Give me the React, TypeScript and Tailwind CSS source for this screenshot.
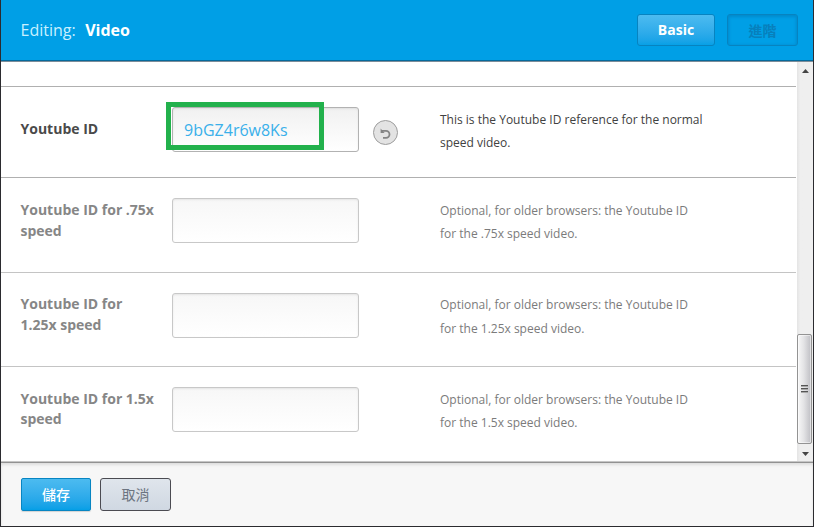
import React from "react";

type Setting = {
  label: string[];
  help: string[];
  value?: string;
  height: string;
  labelPad: string;
  helpPad: string;
  gap: string;
};

const settings: Setting[] = [
  {
    label: ["Youtube ID"],
    help: ["This is the Youtube ID reference for the normal", "speed video."],
    value: "9bGZ4r6w8Ks",
    height: "h-[91px]",
    labelPad: "pt-[31px] leading-[21px]",
    helpPad: "pt-[21px]",
    gap: "leading-[23px]",
  },
  {
    label: ["Youtube ID for .75x", "speed"],
    help: ["Optional, for older browsers: the Youtube ID", "for the .75x speed video."],
    height: "h-[95px]",
    labelPad: "pt-[21px] leading-[21px]",
    helpPad: "pt-[21px]",
    gap: "leading-[23px]",
  },
  {
    label: ["Youtube ID for", "1.25x speed"],
    help: ["Optional, for older browsers: the Youtube ID", "for the 1.25x speed video."],
    height: "h-[94px]",
    labelPad: "pt-[20px] leading-[21px]",
    helpPad: "pt-[20px]",
    gap: "leading-[24px]",
  },
  {
    label: ["Youtube ID for 1.5x", "speed"],
    help: ["Optional, for older browsers: the Youtube ID", "for the 1.5x speed video."],
    height: "h-[95px]",
    labelPad: "pt-[22px] leading-[20px]",
    helpPad: "pt-[21px]",
    gap: "leading-[23px]",
  },
];

function SettingRow({ item }: { item: Setting }) {
  const active = item.value !== undefined;
  return (
    <li
      className={`flex shrink-0 border-t pl-[19.5px] ${item.height} ${active ? "border-[#b0b0b0]" : "border-[#c4c4c4] nth-2:border-[#b0b0b0]"}`}
    >
      <div
        className={`w-[151.5px] shrink-0 whitespace-nowrap text-[14px] font-bold ${item.labelPad} ${active ? "text-[#4a4a4a]" : "text-[#868686]"}`}
      >
        {item.label.map((line) => (
          <div key={line}>{line}</div>
        ))}
      </div>
      <div className="relative w-[187px] shrink-0 pt-5">
        <input
          readOnly
          value={item.value ?? ""}
          className={`block h-[45px] w-[187px] rounded-[3px] border bg-linear-to-b to-white px-[11px] text-[16px] text-[#3ab0ea] shadow-[inset_0_1px_2px_rgba(0,0,0,0.08)] outline-none ${active ? "border-[#b2b2b2] from-[#f1f1f1]" : "border-[#c8c8c8] from-[#f7f7f7]"}`}
        />
        {active && (
          <div className="absolute top-[15px] left-[-6px] h-[48px] w-[158px] border-5 border-[#22b14c]" />
        )}
      </div>
      <div className="w-[81px] shrink-0 pt-[33px] pl-[14px]">
        {active && (
          <button className="flex size-[25px] items-center justify-center rounded-full border border-[#9d9d9d] bg-[#e3e3e3] pt-[2px]">
            <svg width="13" height="13" viewBox="0 0 13 13" fill="none" stroke="#848484" strokeWidth="1.8">
              <path d="M2.8 3.8H7A3.5 3.5 0 0 1 7 10.8H4" />
              <path d="M1.6 1.6V6.1H5.6Z" fill="#848484" stroke="none" />
            </svg>
          </button>
        )}
      </div>
      <div
        className={`whitespace-nowrap text-[12px] ${item.helpPad} ${item.gap} ${active ? "text-[#414141]" : "text-[#7b7b7b]"}`}
      >
        {item.help.map((line) => (
          <div key={line}>{line}</div>
        ))}
      </div>
    </li>
  );
}

function Scrollbar() {
  return (
    <div className="flex w-[16px] shrink-0 flex-col items-start bg-linear-to-r from-[#e4e4e4] via-[#efefef] via-20% to-[#efefef]">
      <svg width="16" height="17" viewBox="0 0 16 17">
        <path d="M8.5 7L12 11H5Z" fill="#444" />
      </svg>
      <div className="mt-[255px] flex h-[110px] w-[15px] flex-col items-center justify-center gap-px rounded-[2px] border border-[#939393] bg-linear-to-r from-[#f7f7f7] via-[#e3e3e5] via-45% to-[#bfbfc4] shadow-[inset_0_0_0_1px_rgba(255,255,255,0.5)]">
        <i className="h-[2px] w-[7px] border-b border-[#a8a8a8] bg-[#555]" />
        <i className="h-[2px] w-[7px] border-b border-[#a8a8a8] bg-[#555]" />
        <i className="h-[2px] w-[7px] border-b border-[#a8a8a8] bg-[#555]" />
      </div>
      <svg width="16" height="17" viewBox="0 0 16 17">
        <path d="M8.5 12L5 8H12Z" fill="#444" />
      </svg>
    </div>
  );
}

export default function App() {
  return (
    <div className="flex h-[527px] w-[814px] flex-col overflow-hidden border-x border-b border-[#2b2b2f] bg-white font-['Open_Sans','Noto_Sans_CJK_TC',sans-serif]">
      <header className="flex h-[62px] shrink-0 items-start border-b border-[#7d8d99] bg-[#009fe6] pr-[15px] pl-[19.5px] shadow-[inset_0_-1px_0_#056a9c]">
        <h1 className="flex gap-[9.5px] pt-[18px] text-[16px] leading-6 text-[#c9f0ff]">
          <span>Editing:</span>
          <span className="font-bold text-white">Video</span>
        </h1>
        <div className="ml-auto flex gap-3 pt-[14px] text-[14px] font-bold">
          <button className="h-8 w-[78px] rounded-[3px] border border-[#0783c0] bg-linear-to-b from-[#4cbbf0] to-[#06a0e6] pb-[2px] text-white">
            Basic
          </button>
          <button className="h-8 w-[71px] rounded-[3px] border border-[#0783c0] bg-[#009fe6] text-[#0780bc] shadow-[inset_0_1px_3px_1px_rgba(0,90,150,0.3)]">
            進階
          </button>
        </div>
      </header>
      <main className="flex h-[399px] shrink-0 overflow-hidden">
        <ul className="flex w-[796px] shrink-0 flex-col pt-6 pr-px">
          {settings.map((item) => (
            <SettingRow key={item.label.join(" ")} item={item} />
          ))}
        </ul>
        <Scrollbar />
      </main>
      <footer className="flex min-h-0 flex-1 gap-[9px] border-t border-[#c6c6c6] bg-[#f7f7f7] pt-4 pl-5 text-[14px] shadow-[inset_0_1px_0_#929292,inset_0_3px_3px_rgba(0,0,0,0.1)]">
        <button className="h-[33px] w-[70px] rounded-[2px] border border-[#0785c2] bg-linear-to-b from-[#4cbbf0] to-[#049fe6] font-medium text-white shadow-[0_1px_1px_rgba(0,0,0,0.15)]">
          儲存
        </button>
        <button className="h-[33px] w-[71px] rounded-[3px] border border-[#4b4b52] bg-linear-to-b from-[#dfe5ec] to-[#d0d8e2] text-[#6c7480]">
          取消
        </button>
      </footer>
    </div>
  );
}
